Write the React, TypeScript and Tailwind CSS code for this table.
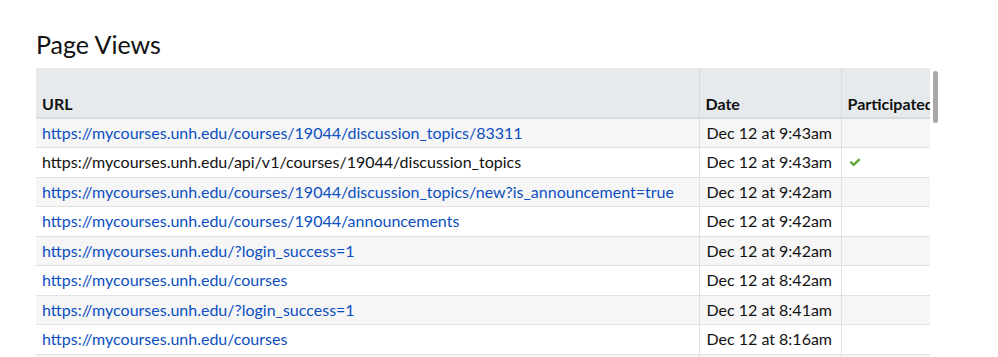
interface PageView {
  url: string;
  date: string;
  link: boolean;
  participated?: boolean;
}

const views: PageView[] = [
  { url: 'https://mycourses.unh.edu/courses/19044/discussion_topics/83311', date: 'Dec 12 at 9:43am', link: true },
  { url: 'https://mycourses.unh.edu/api/v1/courses/19044/discussion_topics', date: 'Dec 12 at 9:43am', link: false, participated: true },
  { url: 'https://mycourses.unh.edu/courses/19044/discussion_topics/new?is_announcement=true', date: 'Dec 12 at 9:42am', link: true },
  { url: 'https://mycourses.unh.edu/courses/19044/announcements', date: 'Dec 12 at 9:42am', link: true },
  { url: 'https://mycourses.unh.edu/?login_success=1', date: 'Dec 12 at 9:42am', link: true },
  { url: 'https://mycourses.unh.edu/courses', date: 'Dec 12 at 8:42am', link: true },
  { url: 'https://mycourses.unh.edu/?login_success=1', date: 'Dec 12 at 8:41am', link: true },
  { url: 'https://mycourses.unh.edu/courses', date: 'Dec 12 at 8:16am', link: true },
  { url: 'https://mycourses.unh.edu/courses/19044', date: 'Dec 12 at 8:16am', link: true },
];

function Tick() {
  return (
    <svg viewBox="0 0 12 9" className="ml-[1px] h-[9px] w-[12px]">
      <path d="M0.5 4.6 L2.3 3 L4.6 5.2 L9.8 0.3 L11.5 1.9 L4.6 8.5 Z" fill="#64a83c" />
    </svg>
  );
}

export default function App() {
  return (
    <div className="h-[357px] w-[998px] overflow-hidden bg-white font-['Lato','Noto_Sans',sans-serif] text-[#111]">
      <h1 className="pl-[36px] pt-[29px] text-[25px] leading-[30px] text-[#111]">Page Views</h1>
      <div className="mt-[9px] flex pl-[36px]">
        <div className="w-[894px] overflow-hidden">
          <table className="w-[900px] table-fixed border-collapse text-[16px]">
            <colgroup>
              <col className="w-[663px]" />
              <col className="w-[142px]" />
              <col className="w-[95px]" />
            </colgroup>
            <thead>
              <tr className="h-[50px] bg-[#e6eaed]">
                <th className="border-b-2 border-r border-[#d9dcdf] px-[6px] pb-[1px] align-bottom text-left font-bold">URL</th>
                <th className="border-b-2 border-r border-[#d9dcdf] px-[6px] pb-[1px] align-bottom text-left font-bold">Date</th>
                <th className="border-b-2 border-[#d9dcdf] px-[6px] pb-[1px] align-bottom text-left font-bold whitespace-nowrap">Participated</th>
              </tr>
            </thead>
            <tbody>
              {views.map((v, i) => (
                <tr key={i} className={i % 2 === 0 ? 'h-[29.5px] bg-[#f6f6f6]' : 'h-[29.5px] bg-white'}>
                  <td className="border-b border-r border-[#e1e1e1] px-[6px] py-0 whitespace-nowrap">
                    {v.link ? (
                      <a href="#" className="text-[#0b4fc2]">{v.url}</a>
                    ) : (
                      <span>{v.url}</span>
                    )}
                  </td>
                  <td className="border-b border-r border-[#e1e1e1] px-[7px] py-0 whitespace-nowrap">{v.date}</td>
                  <td className="border-b border-[#e1e1e1] px-[6px] py-0">
                    {v.participated && <Tick />}
                  </td>
                </tr>
              ))}
            </tbody>
          </table>
        </div>
        <div className="ml-[3px] mt-[3px] h-[52px] w-[5px] rounded-full bg-[#a8a8a8]" />
      </div>
    </div>
  );
}
